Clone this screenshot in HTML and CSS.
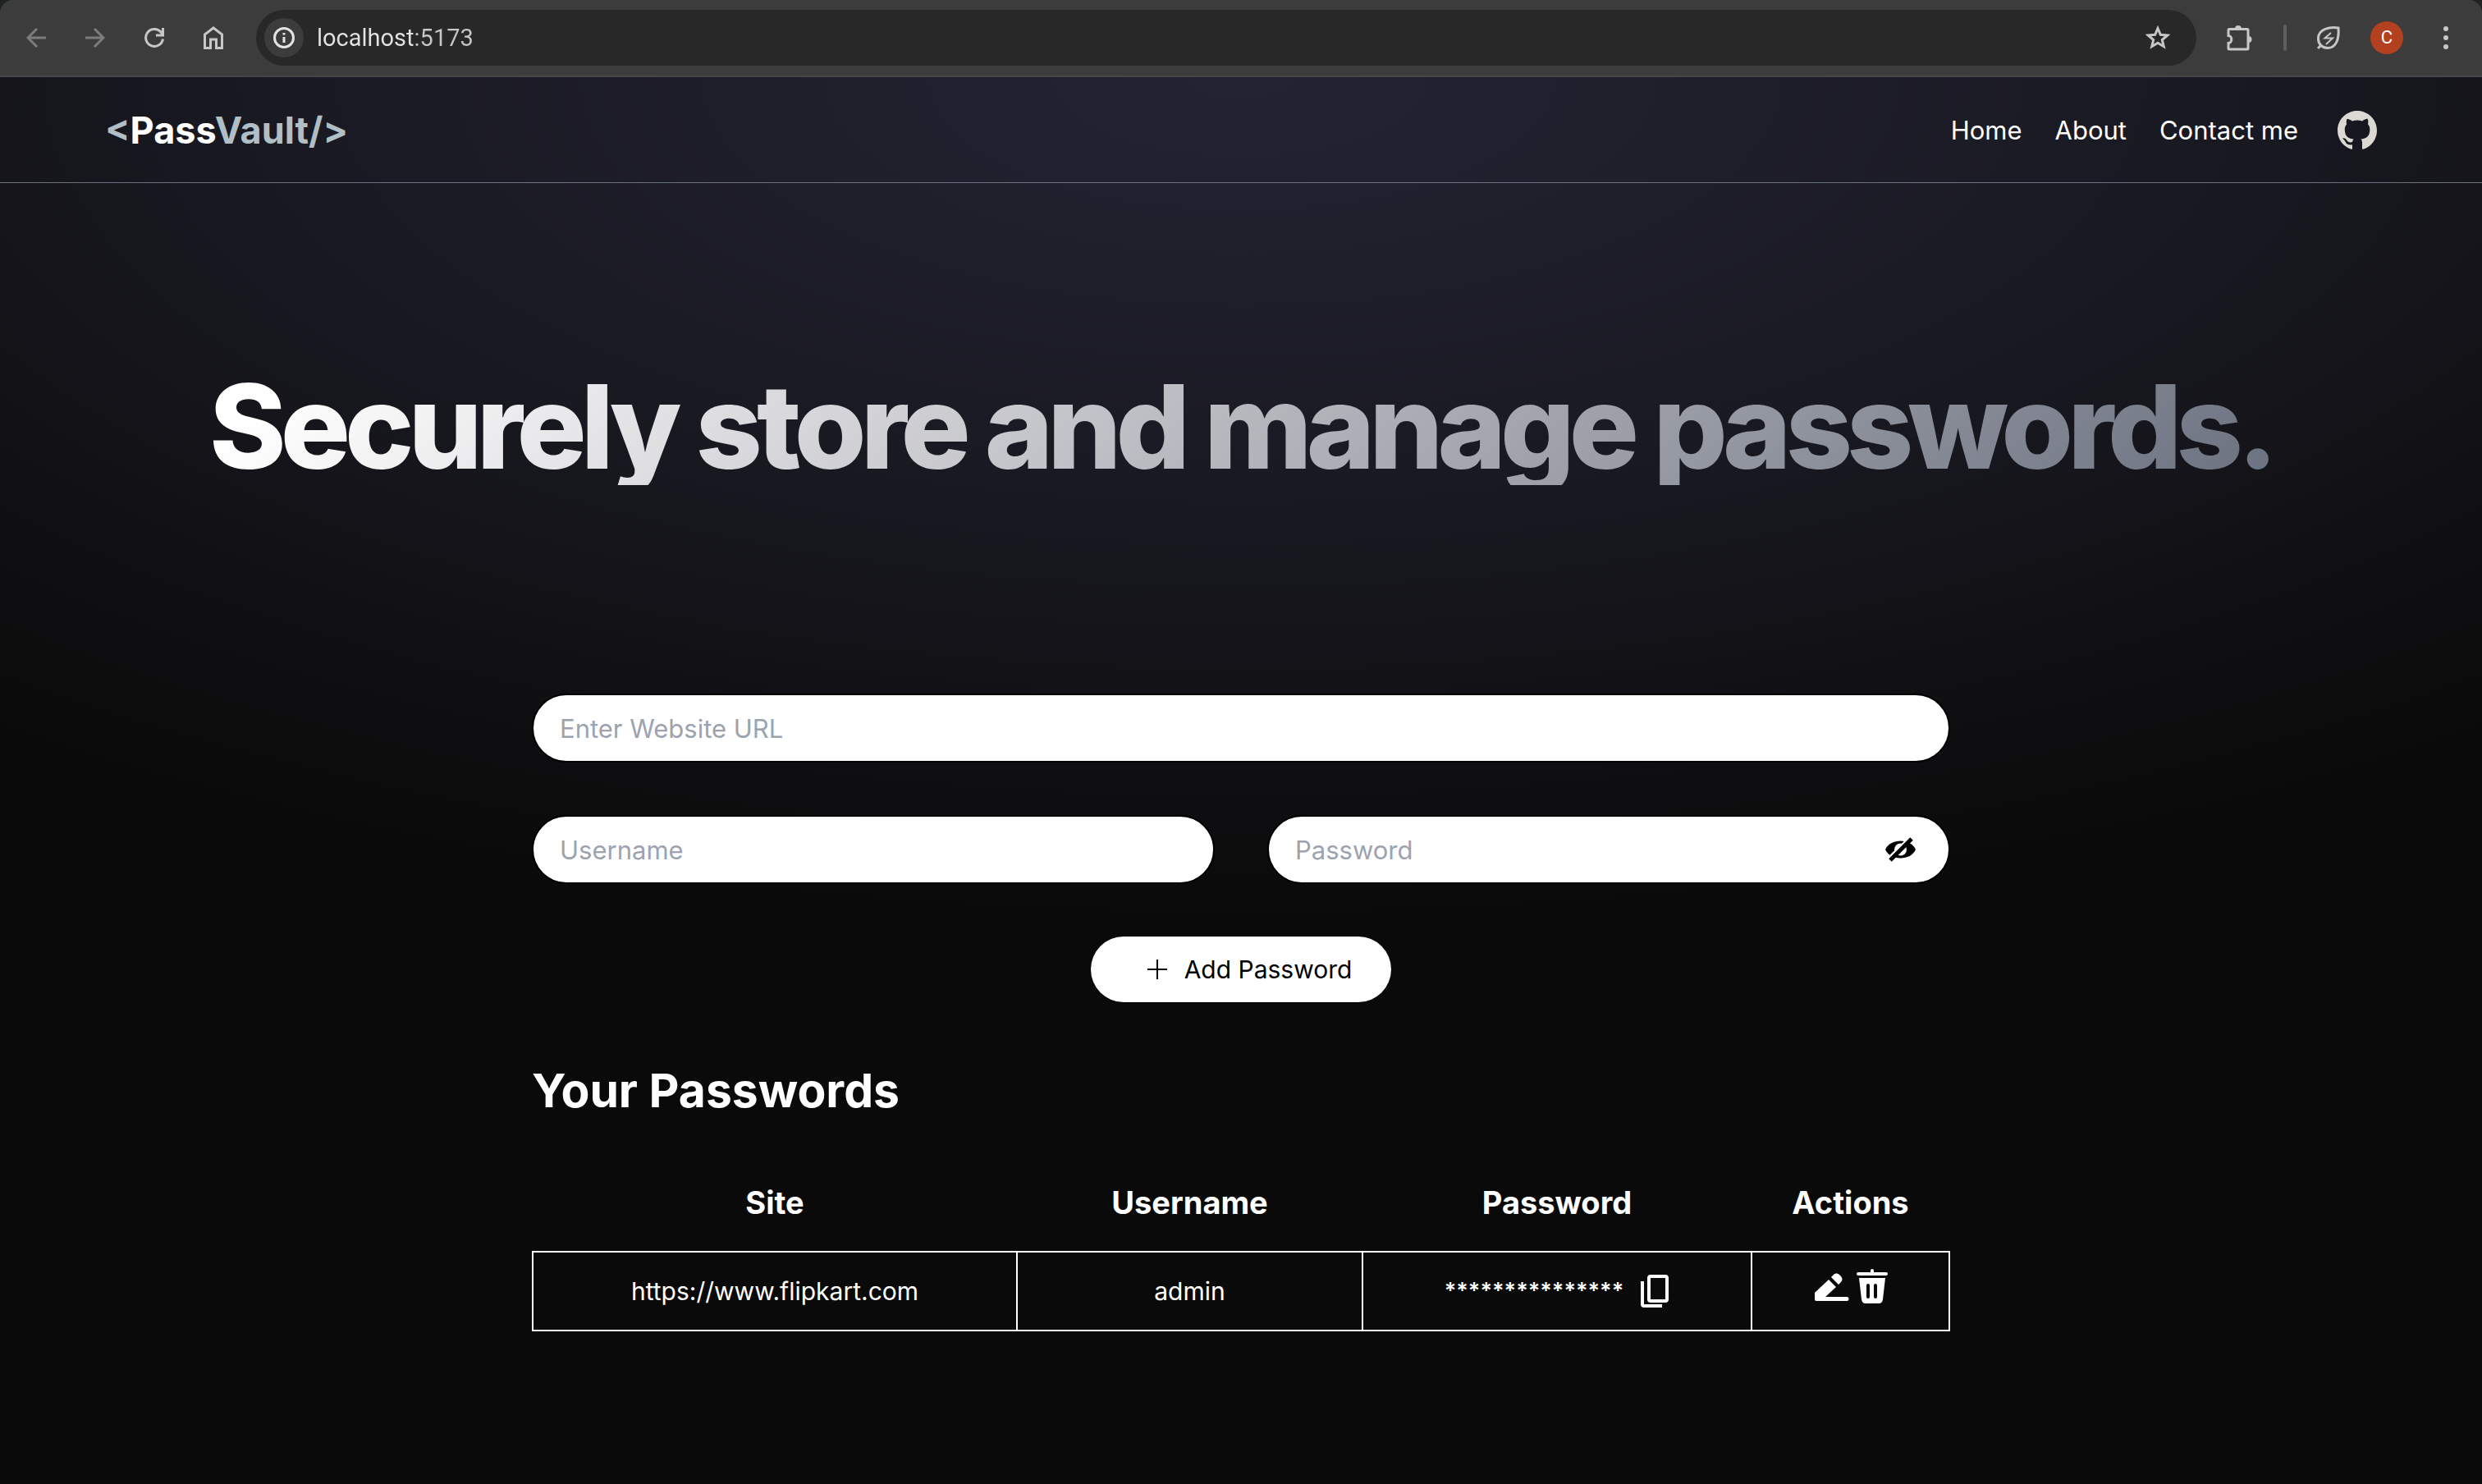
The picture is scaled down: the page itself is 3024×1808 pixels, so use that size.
FILE: index.html
```html
<!DOCTYPE html>
<html lang="en">
<head>
<meta charset="utf-8">
<title>PassVault</title>
<link rel="stylesheet" href="styles.css">
</head>
<body>
<div class="browser">
  <div class="toolbar">
    <button class="tool dim" aria-label="Back"><svg viewBox="0 0 24 24"><path d="M24 12H2M13 1 2 12l11 11"/></svg></button>
    <button class="tool dim" aria-label="Forward"><svg viewBox="0 0 24 24"><path d="M0 12h22M11 1l11 11-11 11"/></svg></button>
    <button class="tool" aria-label="Reload"><svg viewBox="0 0 24 24"><path d="M22.500 13.500A10.500 10.500 0 1 1 20 5l2.500 3M22.500 0v9H14"/></svg></button>
    <button class="tool" aria-label="Home page"><svg class="house" viewBox="0 0 24 28"><path d="M1.500 10 12 2l10.500 8v16.500h-7V16h-7v10.500h-7z"/></svg></button>
    <div class="address">
      <button class="site-info" aria-label="Site information"><svg viewBox="0 0 26 26"><circle cx="13" cy="13" r="11.500"/><path d="M13 12v7M13 7v2.500"/></svg></button>
      <input class="url" aria-label="Address" value="localhost:5173">
      <button class="tool" aria-label="Bookmark"><svg class="star" viewBox="0 0 30 30"><path d="m15 3.500 3.300 7.800 8.400.7-6.400 5.500 2 8.200-7.300-4.400-7.300 4.400 2-8.200L3.300 12l8.400-.7z"/></svg></button>
    </div>
    <div class="extras">
      <button class="tool" aria-label="Extensions"><svg class="puzzle" viewBox="0 0 34 34"><path d="M4 6.500h22a1 1 0 0 1 1 1V30a1 1 0 0 1-1 1H4a1 1 0 0 1-1-1v-6.500c5 0 5-9 0-9v-7a1 1 0 0 1 1-1z"/><path class="solid" d="M11 6a4 4 0 0 1 8 0zM27.500 15a4 4 0 0 1 0 8z"/></svg></button>
      <span class="rule"></span>
      <button class="tool" aria-label="Energy saver"><svg class="leaf" viewBox="0 0 30 30"><path d="M27 3C17 1.500 2.500 4 2.500 16c0 7 5 11.500 11.500 11.500C25 27.500 28 15 27 3zM6 24l-4 4"/><path class="bolt" d="M18 9l-7.500 6.500H20L12 23"/></svg></button>
      <button class="avatar" aria-label="Profile">C</button>
      <button class="tool menu" aria-label="Menu"><svg class="dots" viewBox="0 0 8 30"><circle cx="4" cy="4" r="3"/><circle cx="4" cy="15" r="3"/><circle cx="4" cy="26" r="3"/></svg></button>
    </div>
  </div>
</div>
<div class="page">
  <header class="navbar">
    <div class="logo"><span>&lt;</span>Pass<span>Vault/&gt;</span></div>
    <nav class="links">
      <a href="#home">Home</a>
      <a href="#about">About</a>
      <a href="#contact">Contact me</a>
      <a class="github" href="#github" aria-label="GitHub"><svg viewBox="0 0 16 16"><path d="M8 0C3.580 0 0 3.580 0 8c0 3.540 2.290 6.530 5.470 7.590.4.070.55-.17.55-.38 0-.19-.01-.82-.01-1.490-2.010.37-2.530-.49-2.690-.94-.09-.23-.48-.94-.82-1.130-.28-.15-.68-.52-.01-.53.63-.01 1.080.58 1.230.82.72 1.210 1.870.87 2.330.66.07-.52.28-.87.51-1.070-1.780-.2-3.640-.89-3.640-3.950 0-.87.31-1.590.82-2.150-.08-.2-.36-1.020.08-2.120 0 0 .67-.21 2.200.82.64-.18 1.320-.27 2-.27s1.360.09 2 .27c1.530-1.040 2.200-.82 2.200-.82.44 1.100.16 1.920.08 2.120.51.56.82 1.270.82 2.150 0 3.070-1.870 3.750-3.650 3.950.29.25.54.73.54 1.480 0 1.070-.01 1.930-.01 2.200 0 .21.15.46.55.38A8.010 8.010 0 0 0 16 8c0-4.420-3.580-8-8-8z"/></svg></a>
    </nav>
  </header>
  <h1 class="headline">Securely store and manage passwords.</h1>
  <main class="vault">
    <form class="entry">
      <input class="field wide" type="text" placeholder="Enter Website URL" aria-label="Website URL">
      <input class="field" type="text" placeholder="Username" aria-label="Username">
      <div class="secret">
        <input class="field" type="password" placeholder="Password" aria-label="Password">
        <button class="eye" type="button" aria-label="Show password"><svg viewBox="0 0 37 30"><path class="lid" d="M0 15C6 1 31 1 37 15 31 29 6 29 0 15z"/><circle class="iris" cx="18.500" cy="15" r="7.500"/><path class="gap" d="M2 27 29 1"/><path class="slash" d="M6 28 32 2"/></svg></button>
      </div>
      <button class="add" type="button"><svg viewBox="0 0 26 26"><path d="M13 1v24M1 13h24"/></svg>Add Password</button>
    </form>
    <h2 class="title">Your Passwords</h2>
    <table class="records">
      <colgroup><col class="c-site"><col class="c-user"><col class="c-pass"><col class="c-act"></colgroup>
      <thead><tr><th>Site</th><th>Username</th><th>Password</th><th>Actions</th></tr></thead>
      <tbody><tr>
        <td><a href="#site">https://www.flipkart.com</a></td>
        <td>admin</td>
        <td><div class="cell"><span class="mask">***************</span><button class="icon" aria-label="Copy"><svg viewBox="0 0 36 42"><path d="M13 3h18a2 2 0 0 1 2 2v26a2 2 0 0 1-2 2H13a2 2 0 0 1-2-2V5a2 2 0 0 1 2-2zM3 9v28a2 2 0 0 0 2 2h22"/></svg></button></div></td>
        <td><div class="cell actions"><button class="icon" aria-label="Edit"><svg viewBox="0 0 44 44"><path d="M1 38V30L18 14l9 9-13 12h26a2 2 0 0 1 0 5H3a2 2 0 0 1-2-2zM21 11l3-3c2-2 5-2 7 0l2 2c2 2 2 5 0 7l-3 3z"/></svg></button><button class="icon" aria-label="Delete"><svg viewBox="0 0 38 44"><path d="M17 3a2 2 0 0 1 4 0v2h15a2 2 0 0 1 0 4H2a2 2 0 0 1 0-4h15zM3 12h32l-3 26c-.4 3-2 5-5 5H11c-3 0-4.600-2-5-5zm9 9v14a2 2 0 0 0 4 0V21a2 2 0 0 0-4 0zm9 0v14a2 2 0 0 0 4 0V21a2 2 0 0 0-4 0z"/></svg></button></div></td>
      </tr></tbody>
    </table>
  </main>
</div>
</body>
</html>
```
FILE: styles.css
```css
* { box-sizing: border-box; }
body {
  margin: 0;
  min-height: 100vh;
  display: flex;
  flex-direction: column;
  background: #0a0a0a;
  color: #fff;
  font: 31px/48px Inter, "Liberation Sans", sans-serif;
}
button, input { font: inherit; color: inherit; border: 0; background: none; padding: 0; margin: 0; }
a { color: inherit; text-decoration: none; }
svg { display: block; fill: none; stroke: currentColor; }

/* Browser toolbar */
.browser { background: #1f2421; }
.toolbar {
  display: flex;
  align-items: center;
  height: 94px;
  padding: 0 40px 0 32px;
  gap: 48px;
  background: #3c3c3c;
  border-bottom: 2px solid #474747;
  border-radius: 16px 16px 0 0;
  color: #c7c7c7;
}
.tool svg { width: 24px; height: 24px; stroke-width: 3; }
.dim { color: #7c7c7c; }
.tool .house { height: 28px; }
.address {
  flex: 1;
  display: flex;
  align-items: center;
  gap: 16px;
  height: 68px;
  margin-left: -8px;
  padding: 0 32px 0 10px;
  border-radius: 34px;
  background: #282828;
}
.site-info {
  width: 48px;
  height: 48px;
  border-radius: 50%;
  background: #3c3c3c;
  color: #e3e3e3;
  display: grid;
  place-items: center;
}
.site-info svg { width: 26px; height: 26px; stroke-width: 3; }
.url {
  flex: 1;
  font: 29px/40px Roboto, sans-serif;
  color: transparent;
  background: linear-gradient(to right, #e3e3e3 119px, #c7c7c7 119px);
  background-clip: text;
}
.tool .star { width: 30px; height: 30px; }
.extras { display: flex; align-items: center; gap: 36px; margin-left: -12px; }
.tool .puzzle { width: 34px; height: 34px; }
.solid { fill: currentColor; stroke: none; }
.rule { width: 4px; height: 32px; border-radius: 2px; background: #5e5e5e; }
.tool .leaf { width: 30px; height: 30px; }
.bolt { stroke-width: 2; }
.tool .dots { width: 8px; height: 30px; fill: currentColor; stroke: none; }
.menu { margin-left: 12px; }
.avatar {
  width: 40px;
  height: 40px;
  border-radius: 50%;
  background: #b3401f;
  color: #fff;
  font: 22px/40px Roboto, sans-serif;
}

/* Page */
.page {
  flex: 1;
  background: radial-gradient(ellipse 80% 60% at 50% 0, #242333 0, #1a1a24 45%, #131318 70%, #0a0a0a 100%);
}
.navbar {
  display: flex;
  justify-content: space-between;
  align-items: center;
  height: 129px;
  padding: 2px 128px 0;
  border-bottom: 1px solid #6b7280;
}
.logo { font-size: 45px; line-height: 64px; font-weight: 700; }
.logo span { color: #b0bec5; }
.links { display: flex; align-items: center; gap: 40px; }
.github { margin-left: 8px; color: #dbd7d2; }
.github svg { width: 48px; height: 48px; fill: currentColor; stroke: none; }
.headline {
  width: fit-content;
  margin: 224px auto 0;
  font-size: 142px;
  line-height: 144px;
  font-weight: 800;
  letter-spacing: -7px;
  color: transparent;
  background: linear-gradient(135deg, #fff 4%, #b6b7bd 50%, #6b7280);
  background-clip: text;
}

/* Entry form */
.vault { max-width: 1728px; margin: 254px auto 0; }
.entry { display: grid; grid-template-columns: 1fr 1fr; gap: 64px; }
.wide { grid-column: 1 / -1; }
.field {
  width: 100%;
  height: 84px;
  padding: 0 32px;
  border: 2px solid #000;
  border-radius: 42px;
  background: #fff;
  color: #000;
}
.field::placeholder { color: #9ca3af; opacity: 1; }
.secret { position: relative; }
.eye { position: absolute; right: 42px; top: 27px; color: #000; }
.eye svg { width: 37px; height: 30px; }
.lid { fill: #000; stroke: none; }
.iris { fill: #fff; stroke: none; }
.gap { stroke: #fff; stroke-width: 3; }
.slash { stroke: #000; stroke-width: 5; }
.add {
  grid-column: 1 / -1;
  justify-self: center;
  display: flex;
  align-items: center;
  gap: 20px;
  height: 80px;
  padding: 0 48px 0 68px;
  border-radius: 40px;
  background: #fff;
  color: #000;
  font-size: 30px;
}
.add svg { width: 26px; height: 26px; stroke-width: 2; }

/* Saved passwords */
.title { margin: 72px 0 0; font-size: 57px; line-height: 72px; font-weight: 700; }
.records { width: 100%; margin-top: 40px; border-collapse: collapse; table-layout: fixed; text-align: center; }
.records th { height: 120px; padding: 0; font-size: 38px; line-height: 56px; }
.records td { height: 96px; padding: 0; border: 2px solid #fff; font-size: 30px; }
.cell { display: flex; align-items: center; justify-content: center; gap: 20px; }
.mask { font-size: 27px; font-weight: 600; }
.icon svg { width: 36px; height: 42px; stroke-width: 4; }
.actions { gap: 8px; padding-bottom: 12px; }
.actions .icon svg { width: auto; height: 44px; fill: currentColor; stroke: none; fill-rule: evenodd; }
.c-site { width: 590px; }
.c-user { width: 421px; }
.c-pass { width: 474px; }
```
